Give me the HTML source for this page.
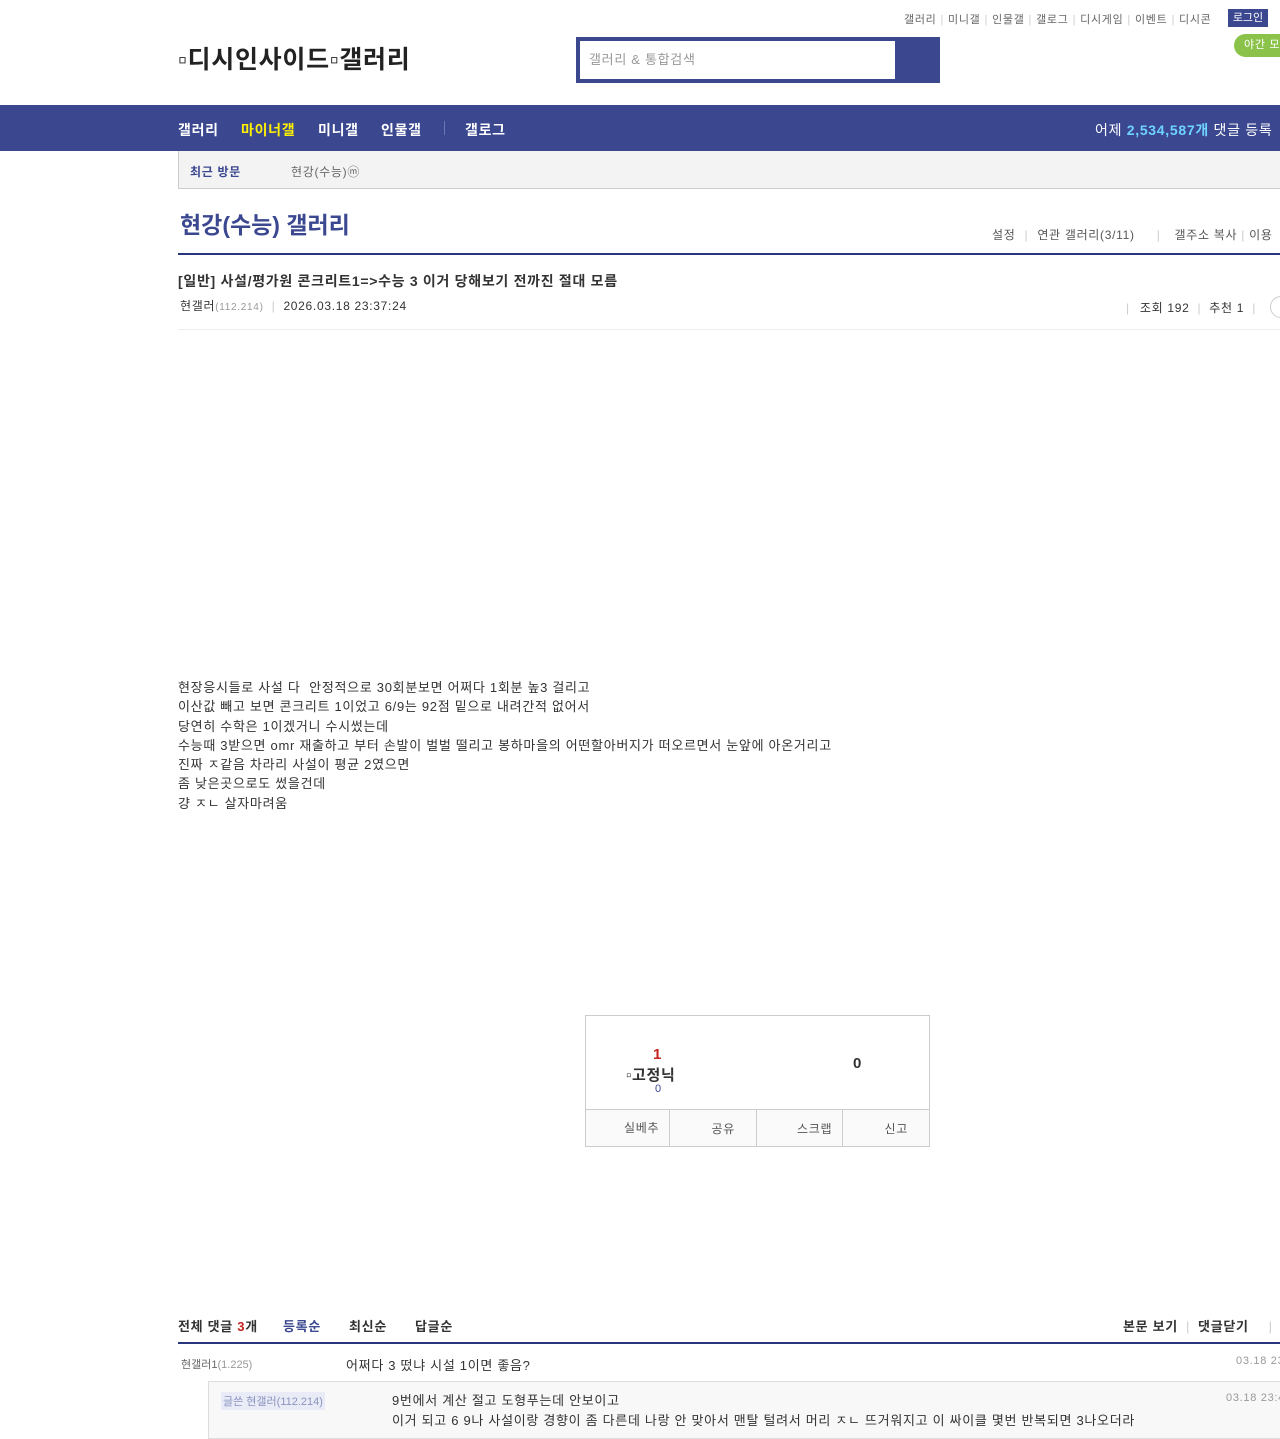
<!DOCTYPE html>
<html><head><meta charset="utf-8">
<style>
*{margin:0;padding:0;box-sizing:border-box}
body{width:1280px;height:1439px;position:relative;background:#fff;font-family:"Liberation Sans","Noto Sans CJK KR",sans-serif;color:#333;overflow:hidden;letter-spacing:0.7px}
.a{position:absolute;white-space:nowrap}
.sep{color:#ccc;margin:0 4px}
</style></head><body>
<div class="a" style="top:11px;left:904px;font-size:11px;color:#666">갤러리<span class="sep">|</span>미니갤<span class="sep">|</span>인물갤<span class="sep">|</span>갤로그<span class="sep">|</span>디시게임<span class="sep">|</span>이벤트<span class="sep">|</span>디시콘</div>
<div class="a" style="top:9px;left:1228px;width:40px;height:18px;background:#3b4890;color:#fff;font-size:11px;line-height:18px;text-align:center;letter-spacing:0">로그인</div>
<div class="a" style="top:34px;left:1234px;width:60px;height:23px;background:#8bc34a;border-radius:12px;color:#fff;font-size:11px;line-height:23px;padding-left:10px">야간 모드</div>
<div class="a" style="top:40px;left:178px;font-size:25px;font-weight:bold;color:#222">▫디시인사이드▫갤러리</div>
<div class="a" style="top:37px;left:576px;width:364px;height:46px;background:#3b4890"></div>
<div class="a" style="top:41px;left:580px;width:315px;height:38px;background:#fff;font-size:13px;color:#999;line-height:38px;padding-left:9px">갤러리 &amp; 통합검색</div>
<div class="a" style="top:105px;left:0;width:1280px;height:46px;background:#3b4890"></div>
<div class="a" style="top:120px;left:178px;font-size:14px;font-weight:bold;color:#fff">갤러리</div>
<div class="a" style="top:120px;left:241px;font-size:14px;font-weight:bold;color:#fff200">마이너갤</div>
<div class="a" style="top:120px;left:318px;font-size:14px;font-weight:bold;color:#fff">미니갤</div>
<div class="a" style="top:120px;left:381px;font-size:14px;font-weight:bold;color:#fff">인물갤</div>
<div class="a" style="top:121px;left:444px;width:1px;height:14px;background:#6b77b0"></div>
<div class="a" style="top:120px;left:465px;font-size:14px;font-weight:bold;color:#fff">갤로그</div>
<div class="a" style="top:120px;left:1095px;font-size:14px;color:#fff">어제 <b style="color:#6fd3ff">2,534,587개</b> 댓글 등록</div>
<div class="a" style="top:151px;left:178px;width:1110px;height:38px;background:#f3f3f3;border:1px solid #ccc;border-top:none"></div>
<div class="a" style="top:163px;left:190px;font-size:12px;font-weight:bold;color:#3b4890">최근 방문</div>
<div class="a" style="top:163px;left:291px;font-size:12px;color:#666">현강(수능)ⓜ</div>
<div class="a" style="top:206px;left:180px;font-size:23px;font-weight:bold;color:#3b4890;letter-spacing:0">현강(수능) 갤러리</div>
<div class="a" style="top:226px;left:992px;font-size:12px;color:#555">설정<span class="sep" style="margin:0 9px">|</span>연관 갤러리(3/11)<span class="sep" style="margin:0 14px 0 22px">|</span>갤주소 복사<span class="sep">|</span>이용</div>
<div class="a" style="top:253px;left:178px;width:1110px;height:2px;background:#29367c"></div>
<div class="a" style="top:271px;left:178px;font-size:14px;font-weight:bold;color:#333">[일반] 사설/평가원 콘크리트1=&gt;수능 3 이거 당해보기 전까진 절대 모름</div>
<div class="a" style="top:297px;left:180px;font-size:12px;color:#333">현갤러<span style="color:#999;font-size:10px">(112.214)</span><span class="sep" style="margin:0 8px">|</span>2026.03.18 23:37:24</div>
<div class="a" style="top:299px;left:1126px;font-size:12px;color:#333"><span class="sep" style="margin:0 10px 0 0">|</span>조회 192<span class="sep" style="margin:0 8px">|</span>추천 1<span class="sep" style="margin:0 8px">|</span></div>
<div class="a" style="top:296px;left:1270px;width:22px;height:22px;border:1px solid #ccc;border-radius:50%"></div>
<div class="a" style="top:329px;left:178px;width:1110px;height:1px;background:#eee"></div>
<div class="a" style="top:678px;left:178px;font-size:13px;line-height:19.3px;color:#333">현장응시들로 사설 다 &nbsp;안정적으로 30회분보면 어쩌다 1회분 높3 걸리고<br>이산값 빼고 보면 콘크리트 1이었고 6/9는 92점 밑으로 내려간적 없어서<br>당연히 수학은 1이겠거니 수시썼는데<br>수능때 3받으면 omr 재출하고 부터 손발이 벌벌 떨리고 봉하마을의 어떤할아버지가 떠오르면서 눈앞에 아온거리고<br>진짜 ㅈ같음 차라리 사설이 평균 2였으면<br>좀 낮은곳으로도 썼을건데<br>걍 ㅈㄴ 살자마려움</div>
<div class="a" style="top:1015px;left:585px;width:345px;height:132px;border:1px solid #ccc"></div>
<div class="a" style="top:1046px;left:653px;font-size:15px;font-weight:bold;color:#c4231f">1</div>
<div class="a" style="top:1064px;left:626px;font-size:15px;font-weight:bold;color:#333">▫고정닉</div>
<div class="a" style="top:1083px;left:655px;font-size:11px;color:#3b4890">0</div>
<div class="a" style="top:1055px;left:853px;font-size:15px;font-weight:bold;color:#333">0</div>
<div class="a" style="top:1109px;left:586px;width:343px;height:37px;border-top:1px solid #ccc;background:#fafafa;display:flex;font-size:12px;color:#555">
<div style="flex:1;border-right:1px solid #ccc;line-height:36px;padding-left:38px">실베추</div>
<div style="flex:1;border-right:1px solid #ccc;line-height:38px;padding-left:42px">공유</div>
<div style="flex:1;border-right:1px solid #ccc;line-height:38px;padding-left:40px">스크랩</div>
<div style="flex:1;line-height:38px;padding-left:42px">신고</div></div>
<div class="a" style="top:1316px;left:178px;font-size:13px;font-weight:bold;color:#333">전체 댓글 <span style="color:#c4231f">3</span>개</div>
<div class="a" style="top:1316px;left:283px;font-size:13px;font-weight:bold;color:#3b4890">등록순</div>
<div class="a" style="top:1316px;left:349px;font-size:13px;font-weight:bold;color:#333">최신순</div>
<div class="a" style="top:1316px;left:415px;font-size:13px;font-weight:bold;color:#333">답글순</div>
<div class="a" style="top:1316px;left:1123px;font-size:13px;font-weight:bold;color:#333">본문 보기<span class="sep" style="margin:0 8px;font-weight:normal">|</span>댓글닫기<span class="sep" style="margin:0 0 0 20px;font-weight:normal">|</span></div>
<div class="a" style="top:1342px;left:178px;width:1110px;height:2px;background:#29367c"></div>
<div class="a" style="top:1356px;left:181px;font-size:11px;color:#666;letter-spacing:0">현갤러1<span style="color:#999">(1.225)</span></div>
<div class="a" style="top:1355px;left:346px;font-size:13px;color:#333">어쩌다 3 떴냐 시설 1이면 좋음?</div>
<div class="a" style="top:1355px;left:1236px;font-size:11px;color:#999">03.18 23:4</div>
<div class="a" style="top:1381px;left:208px;width:1080px;height:58px;background:#f8f8f8;border:1px solid #ddd;border-right:none"></div>
<div class="a" style="top:1392px;left:221px;font-size:11px;color:#8b93c0;background:#e9ecf6;padding:1px 2px;letter-spacing:0">글쓴 현갤러(112.214)</div>
<div class="a" style="top:1391px;left:392px;font-size:13px;line-height:20px;color:#333">9번에서 계산 절고 도형푸는데 안보이고<br>이거 되고 6 9나 사설이랑 경향이 좀 다른데 나랑 안 맞아서 맨탈 털려서 머리 ㅈㄴ 뜨거워지고 이 싸이클 몇번 반복되면 3나오더라</div>
<div class="a" style="top:1392px;left:1226px;font-size:11px;color:#999">03.18 23:4</div>
</body></html>
